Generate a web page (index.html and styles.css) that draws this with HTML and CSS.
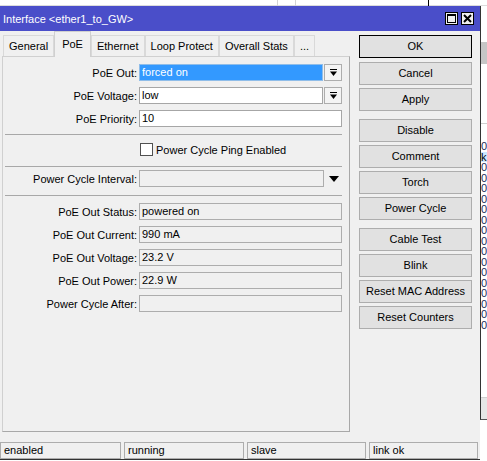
FILE: index.html
```html
<!DOCTYPE html>
<html>
<head>
<meta charset="utf-8">
<link rel="stylesheet" href="styles.css">
</head>
<body>
<div class="desktop">
  <div class="bg-top"></div>
  <div class="bg-vline a"></div>
  <div class="bg-vline b"></div>
  <div class="bg-vline c"></div>
  <div class="bg-right">
    <div class="bgr-white1"></div>
    <div class="bgr-grey"></div>
    <div class="bgr-white2"></div>
    <div class="bgr-rows">
      <div>0</div><div class="hl">k</div><div>0</div><div>0</div><div>0</div><div>0</div>
      <div>0</div><div>0</div><div>0</div><div>0</div><div>0</div><div>0</div>
      <div>0</div><div>0</div><div>0</div><div>0</div><div>0</div><div>0</div>
    </div>
    <div class="bgr-fill"></div>
    <div class="bgr-foot"></div>
  </div>

  <div class="dialog">
    <div class="titlebar">
      <span class="title">Interface &lt;ether1_to_GW&gt;</span>
      <div class="tbtns">
        <div class="tbtn"><svg width="11" height="11" viewBox="0 0 11 11"><rect x="1.5" y="1.5" width="8" height="8" fill="none" stroke="#000" stroke-width="1"/><rect x="1" y="1" width="9" height="2" fill="#000"/></svg></div>
        <div class="tbtn"><svg width="11" height="11" viewBox="0 0 11 11"><path d="M2 2 L9 9 M9 2 L2 9" stroke="#000" stroke-width="2"/></svg></div>
      </div>
    </div>

    <div class="body">
      <div class="leftcol">
        <div class="tabs">
          <div class="tab">General</div>
          <div class="tab sel">PoE</div>
          <div class="tab">Ethernet</div>
          <div class="tab">Loop Protect</div>
          <div class="tab">Overall Stats</div>
          <div class="tab">...</div>
        </div>
        <div class="panel">
          <div class="row">
            <div class="label">PoE Out:</div>
            <div class="field combo sel">forced on</div>
            <div class="dropbtn"><svg width="9" height="9" viewBox="0 0 9 9"><rect x="1" y="1" width="7" height="1" fill="#000"/><path d="M1 3.5 H8 L4.5 8 Z" fill="#000"/></svg></div>
          </div>
          <div class="row">
            <div class="label">PoE Voltage:</div>
            <div class="field combo">low</div>
            <div class="dropbtn"><svg width="9" height="9" viewBox="0 0 9 9"><rect x="1" y="1" width="7" height="1" fill="#000"/><path d="M1 3.5 H8 L4.5 8 Z" fill="#000"/></svg></div>
          </div>
          <div class="row">
            <div class="label">PoE Priority:</div>
            <div class="field full">10</div>
          </div>
          <div class="sep s1"></div>
          <div class="row cbrow">
            <div class="label"></div>
            <div class="checkbox"></div>
            <div class="cblabel">Power Cycle Ping Enabled</div>
          </div>
          <div class="sep s2"></div>
          <div class="row interval">
            <div class="label">Power Cycle Interval:</div>
            <div class="field wide ro"></div>
            <div class="tri"><svg width="10" height="6" viewBox="0 0 10 6"><path d="M0 0 H10 L5 6 Z" fill="#000"/></svg></div>
          </div>
          <div class="sep s3"></div>
          <div class="row">
            <div class="label">PoE Out Status:</div>
            <div class="field full ro">powered on</div>
          </div>
          <div class="row">
            <div class="label">PoE Out Current:</div>
            <div class="field full ro">990 mA</div>
          </div>
          <div class="row">
            <div class="label">PoE Out Voltage:</div>
            <div class="field full ro">23.2 V</div>
          </div>
          <div class="row">
            <div class="label">PoE Out Power:</div>
            <div class="field full ro">22.9 W</div>
          </div>
          <div class="row">
            <div class="label">Power Cycle After:</div>
            <div class="field full ro"></div>
          </div>
        </div>
      </div>

      <div class="btncol">
        <div class="btn default">OK</div>
        <div class="btn">Cancel</div>
        <div class="btn grp-end">Apply</div>
        <div class="btn">Disable</div>
        <div class="btn">Comment</div>
        <div class="btn">Torch</div>
        <div class="btn grp-end">Power Cycle</div>
        <div class="btn">Cable Test</div>
        <div class="btn">Blink</div>
        <div class="btn">Reset MAC Address</div>
        <div class="btn">Reset Counters</div>
      </div>
    </div>

    <div class="statusbar">
      <div class="sbox w1">enabled</div>
      <div class="sbox w2">running</div>
      <div class="sbox w3">slave</div>
      <div class="sbox w4">link ok</div>
    </div>
  </div>
</div>
</body>
</html>
```

FILE: styles.css
```css
* { box-sizing: border-box; margin: 0; padding: 0; }
html, body { width: 487px; height: 461px; overflow: hidden; }
body {
  background: #fff;
  font-family: "Liberation Sans", Arial, sans-serif;
  font-size: 11px;
  color: #000;
}
.desktop { position: relative; width: 487px; height: 461px; background: #fff; }

/* background window bits */
.bg-top { position: absolute; left: 0; top: 0; width: 487px; height: 6px; border-bottom: 1px solid #dcdcdc; }
.bg-vline { position: absolute; top: 0; width: 1px; height: 6px; background: #d4d4d4; }
.bg-vline.a { left: 277px; }
.bg-vline.b { left: 295px; }
.bg-vline.c { left: 428px; background: #000; }
.bg-right {
  position: absolute; left: 480px; top: 6px; width: 7px; height: 414px;
  border-left: 1px solid #333; border-bottom: 1px solid #555;
  display: flex; flex-direction: column; overflow: hidden; background: #fff;
}
.bgr-white1 { height: 36px; }
.bgr-grey { height: 22px; background: #c6c6c6; }
.bgr-white2 { height: 60px; border-bottom: 1px solid #d0d0d0; }
.bgr-rows { padding-top: 17px; line-height: 10.5px; font-size: 11px; white-space: nowrap; color: #1a2a5a; }
.bgr-rows .hl { background: #cce8ff; color: #000; }
.bgr-fill { flex: 1; }
.bgr-foot { height: 22px; background: #e6e6e6; border-top: 1px solid #d0d0d0; }

/* dialog */
.dialog {
  position: absolute; left: 0; top: 6px; width: 480px; height: 454px;
  background: #f0f0f0; border-bottom: 1px solid #333;
  display: flex; flex-direction: column;
}
.titlebar {
  height: 25px; background: #4a4ec9; color: #fff;
  display: flex; align-items: center; justify-content: space-between;
  padding: 0 6px 0 3px;
}
.title { font-size: 11px; }
.tbtns { display: flex; gap: 3px; }
.tbtn {
  width: 13px; height: 13px; background: #f0f0f0; border: 1px solid #000;
  display: flex; align-items: center; justify-content: center;
}

.body { display: flex; padding-left: 2px; }
.leftcol { width: 348px; display: flex; flex-direction: column; }

.tabs { height: 25px; display: flex; align-items: flex-end; padding-left: 1px; }
.tab {
  height: 21px; line-height: 20px; padding: 0 5px;
  border: 1px solid #d9d9d9; border-bottom: 0; background: #f0f0f0;
  white-space: nowrap;
}
.tab.sel {
  height: 26px; line-height: 24px; padding: 0 7px;
  margin-bottom: -1px; position: relative; z-index: 1;
  border-color: #d0d0d0; background: #f0f0f0;
}

.panel {
  height: 376px; border: 1px solid #d0d0d0; border-right-color: #a8a8a8; border-bottom-color: #a8a8a8;
  padding-top: 7px; display: flex; flex-direction: column;
}
.row { display: flex; align-items: center; height: 17px; margin-bottom: 6px; flex: none; }
.label { width: 134px; margin-right: 2px; text-align: right; white-space: nowrap; }
.field {
  height: 17px; line-height: 15px; padding-left: 2px;
  border: 1px solid #a6a6a6; background: #fff; white-space: nowrap; overflow: hidden;
}
.field.combo { width: 184px; }
.field.full { width: 203px; }
.field.wide { width: 185px; }
.field.sel { background: #3399ff; color: #fff; border-color: #8fbde9; }
.field.ro { background: #f0f0f0; border-color: #adadad; }
.dropbtn {
  width: 18px; height: 17px; margin-left: 1px;
  border: 1px solid #adadad; background: #f4f4f4;
  display: flex; align-items: center; justify-content: center;
}
.tri { width: 18px; display: flex; justify-content: center; padding-left: 1px; }

.sep { height: 1px; background: #a8a8a8; margin: 0 7px 0 2px; flex: none; }
.sep.s1 { margin-top: 1px; margin-bottom: 6px; }
.sep.s2 { margin-top: 8px; margin-bottom: 3px; }
.sep.s3 { margin-top: 8px; margin-bottom: 7px; }
.cbrow { margin-bottom: 0; }
.interval { margin-bottom: 0; }
.checkbox { width: 13px; height: 13px; border: 1px solid #505050; background: #fff; margin-left: 1px; }
.cblabel { margin-left: 3px; white-space: nowrap; }

/* buttons */
.btncol { margin-left: 9px; padding-top: 4px; display: flex; flex-direction: column; }
.btn {
  width: 113px; height: 23px; line-height: 21px; text-align: center;
  border: 1px solid #adadad; background: #e1e1e1; margin-bottom: 3px; white-space: nowrap;
}
.btn.default { border-color: #000; margin-bottom: 4px; }
.btn.grp-end { margin-bottom: 8px; }

/* status bar */
.statusbar { margin-top: 10px; height: 17px; display: flex; gap: 3px; }
.sbox {
  height: 17px; line-height: 15px; padding-left: 3px;
  border: 1px solid #adadad; white-space: nowrap;
}
.sbox.w1 { width: 121px; }
.sbox.w2 { width: 120px; }
.sbox.w3 { width: 119px; }
.sbox.w4 { width: 109px; }
```
